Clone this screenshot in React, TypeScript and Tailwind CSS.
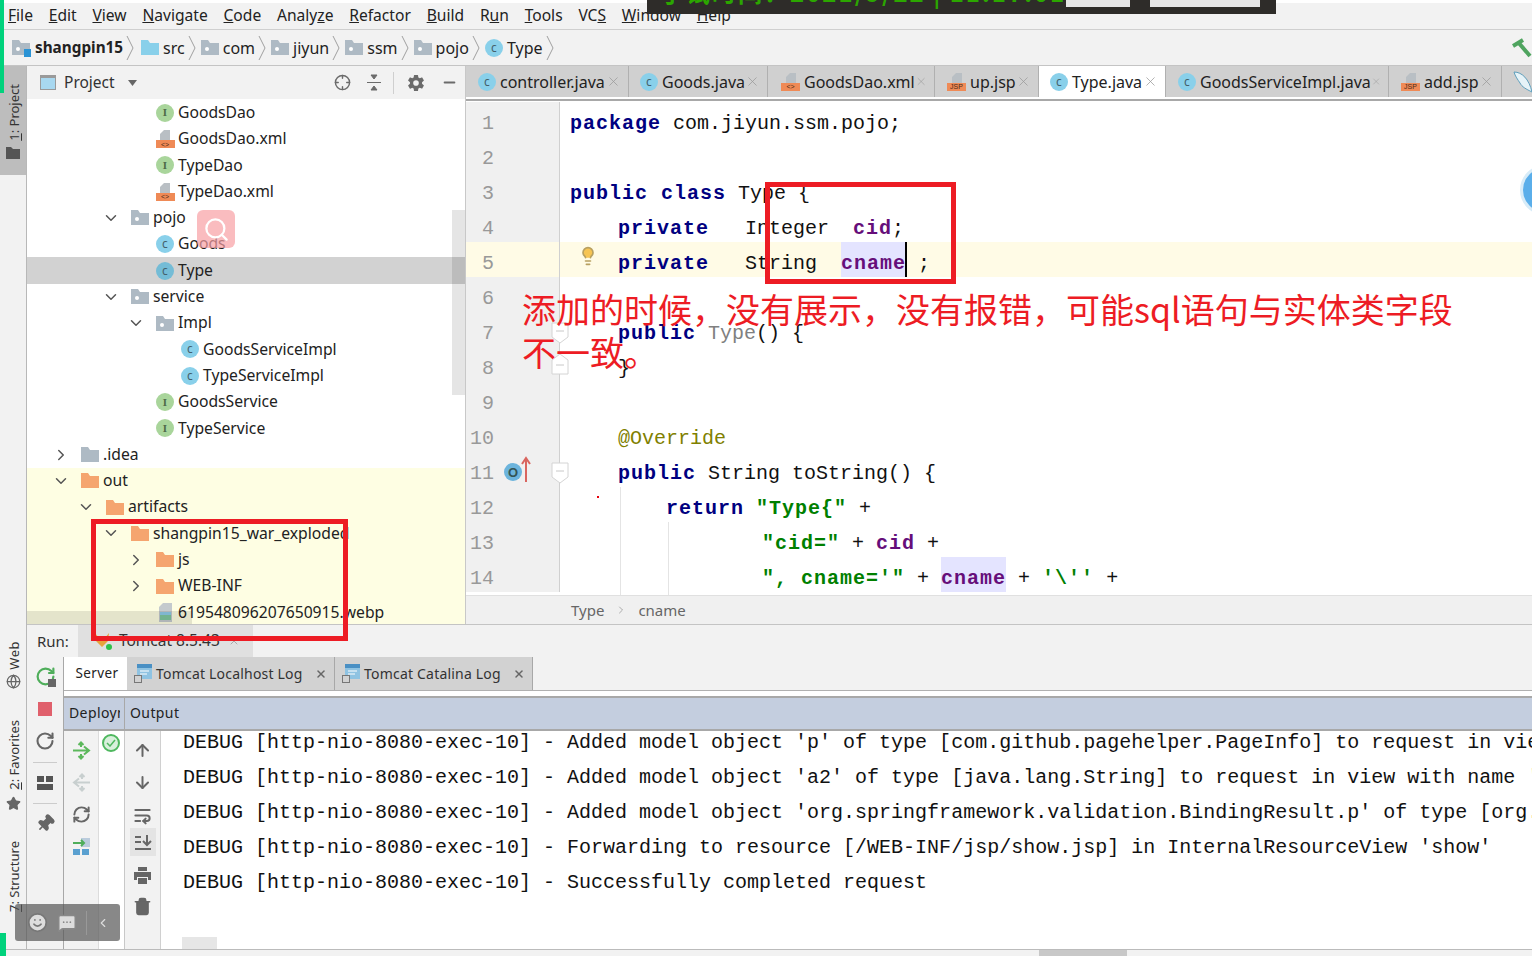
import { ReactNode } from 'react';
import {
  ArrowDown, ArrowUp, ChevronDown, ChevronRight, Crosshair, Globe, Lightbulb, Minus,
  MessageSquareMore, Pin, RefreshCw, RotateCw, Search, Smile, Star, Trash2, WrapText, X,
} from 'lucide-react';
import { IoSettingsSharp } from 'react-icons/io5';

const UI = { fontFamily: '"Noto Sans", sans-serif' };

function ClassIcon({ dark }: { dark?: boolean }) {
  return (
    <span className={`flex w-[18px] h-[18px] shrink-0 items-center justify-center rounded-full text-[12px] leading-none text-[#44606c] ${dark ? 'bg-[#74bcd6]' : 'bg-[#89d0ea]'}`}>
      c
    </span>
  );
}

function InterfaceIcon() {
  return (
    <span className="flex w-[18px] h-[18px] shrink-0 items-center justify-center rounded-full bg-[#a9d59b] text-[11px] font-bold leading-none text-[#4e6b47] font-['Liberation_Serif']">
      I
    </span>
  );
}

function Folder({ color = '#aebac4', dot }: { color?: string; dot?: boolean }) {
  return (
    <svg width="18" height="15" viewBox="0 0 18 15" className="shrink-0">
      <path d="M0 0h7l2 3h9v12H0z" fill={color} />
      {dot && <circle cx="6" cy="9" r="2" fill="#fff" />}
    </svg>
  );
}

function TagFile({ tag }: { tag: string }) {
  return (
    <span className="flex w-[19px] shrink-0 flex-col items-center">
      <svg width="12" height="10" viewBox="0 0 12 10">
        <path d="M5 0h6v10H1V4z" fill="#b9bfc4" />
      </svg>
      <span className="flex h-[8px] w-[19px] items-center justify-center bg-[#ef8a56] text-[7px] leading-none text-[#4a2a18] font-['Liberation_Sans']">
        {tag}
      </span>
    </span>
  );
}

function ImageFile() {
  return (
    <svg width="15" height="19" viewBox="0 0 15 19" className="shrink-0">
      <path d="M5 0h9v19H1V4z" fill="#c4cacd" />
      <rect x="2" y="9" width="11" height="8" fill="#7fc7a0" />
      <rect x="2" y="9" width="11" height="3" fill="#8ecbe8" />
    </svg>
  );
}

function PathSep() {
  return (
    <svg width="8" height="26" viewBox="0 0 8 26" className="ml-[3px] shrink-0">
      <path d="M1 1l6 12-6 12" fill="none" stroke="#a0a0a0" />
    </svg>
  );
}

function DeployArrows({ color, flip }: { color: string; flip?: boolean }) {
  return (
    <svg width="19" height="19" viewBox="0 0 19 19" className={flip ? '-scale-x-100' : ''}>
      <path d="M1 9.5h16M12 5.5l5 4-5 4M9 6V2M6.5 4L9 1.5 11.5 4M9 13v4M6.5 15L9 17.5 11.5 15" fill="none" stroke={color} strokeWidth="2" />
    </svg>
  );
}

type Kind = 'class' | 'iface' | 'xml' | 'pkg' | 'dir' | 'out' | 'img';

const TREE: { d: number; k: Kind; t: string; open?: boolean; shut?: boolean; y?: boolean; sel?: boolean }[] = [
  { d: 3, k: 'iface', t: 'GoodsDao' },
  { d: 3, k: 'xml', t: 'GoodsDao.xml' },
  { d: 3, k: 'iface', t: 'TypeDao' },
  { d: 3, k: 'xml', t: 'TypeDao.xml' },
  { d: 2, k: 'pkg', t: 'pojo', open: true },
  { d: 3, k: 'class', t: 'Goods' },
  { d: 3, k: 'class', t: 'Type', sel: true },
  { d: 2, k: 'pkg', t: 'service', open: true },
  { d: 3, k: 'pkg', t: 'Impl', open: true },
  { d: 4, k: 'class', t: 'GoodsServiceImpl' },
  { d: 4, k: 'class', t: 'TypeServiceImpl' },
  { d: 3, k: 'iface', t: 'GoodsService' },
  { d: 3, k: 'iface', t: 'TypeService' },
  { d: 0, k: 'dir', t: '.idea', shut: true },
  { d: 0, k: 'out', t: 'out', open: true, y: true },
  { d: 1, k: 'out', t: 'artifacts', open: true, y: true },
  { d: 2, k: 'out', t: 'shangpin15_war_exploded', open: true, y: true },
  { d: 3, k: 'out', t: 'js', shut: true, y: true },
  { d: 3, k: 'out', t: 'WEB-INF', shut: true, y: true },
  { d: 3, k: 'img', t: '619548096207650915.webp', y: true },
];

function TreeIcon({ k, sel }: { k: Kind; sel?: boolean }) {
  if (k === 'class') return <ClassIcon dark={sel} />;
  if (k === 'iface') return <InterfaceIcon />;
  if (k === 'xml') return <TagFile tag="<>" />;
  if (k === 'pkg') return <Folder dot />;
  if (k === 'dir') return <Folder />;
  if (k === 'out') return <Folder color="#f5a56f" />;
  return <ImageFile />;
}

const TABS = [
  { t: 'controller.java', w: 'w-[159px] pl-[8px]', i: 'c' },
  { t: 'Goods.java', w: 'w-[139px] pl-[11px]', i: 'c' },
  { t: 'GoodsDao.xml', w: 'w-[167px] pl-[13px]', i: 'x' },
  { t: 'up.jsp', w: 'w-[104px] pl-[12px]', i: 'j' },
  { t: 'Type.java', w: 'w-[127px] pl-[11px]', i: 'c', on: true },
  { t: 'GoodsServiceImpl.java', w: 'w-[223px] pl-[12px]', i: 'c' },
  { t: 'add.jsp', w: 'w-[113px] pl-[12px]', i: 'j' },
];

const CRUMBS: { t: string; n: ReactNode }[] = [
  { t: 'src', n: <Folder color="#89d0ea" /> },
  { t: 'com', n: <Folder dot /> },
  { t: 'jiyun', n: <Folder dot /> },
  { t: 'ssm', n: <Folder dot /> },
  { t: 'pojo', n: <Folder dot /> },
  { t: 'Type', n: <ClassIcon /> },
];

const MENU: [string, string, string][] = [
  ['', 'F', 'ile'], ['', 'E', 'dit'], ['', 'V', 'iew'], ['', 'N', 'avigate'], ['', 'C', 'ode'], ['Analy', 'z', 'e'],
  ['', 'R', 'efactor'], ['', 'B', 'uild'], ['R', 'u', 'n'], ['', 'T', 'ools'], ['VC', 'S', ''], ['', 'W', 'indow'], ['', 'H', 'elp'],
];

const Kw = ({ children }: { children: ReactNode }) => <span className="font-bold tracking-[1px] text-[#000080]">{children}</span>;
const Str = ({ children }: { children: ReactNode }) => <span className="font-bold tracking-[1px] text-[#008000]">{children}</span>;
const Fld = ({ children, mark }: { children: ReactNode; mark?: boolean }) => (
  <span className={`inline-block h-[35px] font-bold tracking-[1px] text-[#660e7a] ${mark ? 'bg-[#e4e4ff]' : ''}`}>{children}</span>
);

const CODE: ReactNode[] = [
  <><Kw>package</Kw> com.jiyun.ssm.pojo;</>,
  <></>,
  <><Kw>public class</Kw> Type {'{'}</>,
  <>{'    '}<Kw>private</Kw>{'   '}Integer{'  '}<Fld>cid</Fld>;</>,
  <>{'    '}<Kw>private</Kw>{'   '}String{'  '}<Fld mark>cname</Fld><span className="inline-block h-[35px] w-[2px] -ml-[1px] -mr-[1px] bg-black align-top" />{' ;'}</>,
  <></>,
  <>{'    '}<Kw>public</Kw> <span className="text-[#808080]">Type</span>() {'{'}</>,
  <>{'    }'}</>,
  <></>,
  <>{'    '}<span className="text-[#808000]">@Override</span></>,
  <>{'    '}<Kw>public</Kw> String toString() {'{'}</>,
  <>{'        '}<Kw>return</Kw> <Str>"Type{'{'}"</Str> +</>,
  <>{'                '}<Str>"cid="</Str> + <Fld>cid</Fld> +</>,
  <>{'                '}<Str>", cname='"</Str> + <Fld mark>cname</Fld> + <Str>'\''</Str> +</>,
];

const LOG = [
  "Added model object 'p' of type [com.github.pagehelper.PageInfo] to request in view with name 'show'",
  "Added model object 'a2' of type [java.lang.String] to request in view with name 'show'",
  "Added model object 'org.springframework.validation.BindingResult.p' of type [org.springframework.validation.BeanPropertyBindingResult]",
  "Forwarding to resource [/WEB-INF/jsp/show.jsp] in InternalResourceView 'show'",
  'Successfully completed request',
];

function FoldMark({ up }: { up?: boolean }) {
  return (
    <svg width="18" height="22" viewBox="0 0 18 22" className={`absolute left-[85px] ${up ? 'top-[6px]' : 'top-[10px]'}`}>
      <path d={up ? 'M1 7l8-6 8 6v14H1z' : 'M1 1h16v14l-8 6-8-6z'} fill="#fff" stroke="#d4d4d4" />
      <path d={up ? 'M5 12h8' : 'M5 9h8'} stroke="#c8c8c8" />
    </svg>
  );
}

function LogTab({ t, w }: { t: string; w: string }) {
  return (
    <div className={`${w} flex h-full items-center border-r border-[#a8a8a8] bg-[#d2d2d2] pl-[7px] text-[14px] tracking-[0.2px] text-[#333]`}>
      <svg width="18" height="19" viewBox="0 0 18 19" className="shrink-0">
        <rect x="3" y="0" width="15" height="15" fill="#8fc3e2" />
        <rect x="3" y="0" width="15" height="4" fill="#4a90c4" />
        <path d="M6 7h9M6 10h7" stroke="#fff" />
        <rect x="0.5" y="11.5" width="7" height="7" fill="#d2d2d2" stroke="#777" />
      </svg>
      <span className="ml-[4px]">{t}</span>
      <X size={12} strokeWidth={3} className="ml-auto mr-[7px] text-[#666]" />
    </div>
  );
}

export default function App() {
  return (
    <div className="relative flex h-[956px] w-[1532px] flex-col overflow-hidden bg-[#f2f2f2] text-[#222]" style={UI}>
      {/* menu */}
      <div className="h-[3px] bg-white" />
      <div className="flex h-[27px] items-center gap-[15.8px] border-b border-[#cfcfcf] pl-[8px] text-[15.6px]">
        {MENU.map(([a, u, b]) => (
          <span key={u + b}>{a}<u>{u}</u>{b}</span>
        ))}
      </div>

      {/* nav path */}
      <div className="flex h-[36px] items-center border-b border-[#c4c4c4] pl-[12px] text-[16px]">
        <span className="relative">
          <Folder dot />
          <span className="absolute bottom-[-2px] right-[-1px] h-[8px] w-[7px] bg-[#2a93d5]" />
        </span>
        <span className="ml-[5px] text-[15.3px] font-bold">shangpin15</span>
        <PathSep />
        <span className="w-[2px]" />
        {CRUMBS.map((c) => (
          <span key={c.t} className="ml-[5px] flex items-center">
            {c.n}
            <span className="ml-[4px]">{c.t}</span>
            <PathSep />
          </span>
        ))}
        <svg width="20" height="20" viewBox="0 0 20 20" className="ml-auto">
          <path d="M1 8L11 2M6 4l12 14" fill="none" stroke="#4fa45f" strokeWidth="4" />
        </svg>
      </div>

      <div className="flex min-h-0 flex-1">
        {/* left tool strip */}
        <div className="flex w-[27px] shrink-0 flex-col border-r border-[#b8b8b8] text-[#333]">
          <div className="flex h-[109px] flex-col items-center justify-center gap-[6px] bg-[#bdbdbd] pt-[2px]">
            <span className="ml-[3px] rotate-180 text-[13px] [writing-mode:vertical-rl]"><u>1</u>: Project</span>
            <svg width="14" height="12" viewBox="0 0 14 12"><path d="M0 0h5l2 2h7v10H0z" fill="#555" /></svg>
          </div>
          <div className="mt-[466px] flex flex-col items-center gap-[4px]">
            <span className="ml-[3px] rotate-180 text-[13px] tracking-[0.5px] [writing-mode:vertical-rl]">Web</span>
            <Globe size={15} className="text-[#666]" />
          </div>
          <div className="mt-[31px] flex flex-col items-center gap-[7px]">
            <span className="ml-[3px] rotate-180 text-[13px] [writing-mode:vertical-rl]"><u>2</u>: Favorites</span>
            <Star size={15} fill="#666" className="text-[#666]" />
          </div>
          <div className="mt-[30px] flex flex-col items-center">
            <span className="ml-[3px] rotate-180 text-[13px] [writing-mode:vertical-rl]"><u>7</u>: Structure</span>
          </div>
        </div>

        <div className="flex min-w-0 flex-1 flex-col">
          <div className="flex h-[559px] shrink-0 border-b border-[#c4c4c4]">
            {/* project */}
            <div className="relative flex w-[439px] shrink-0 flex-col border-r border-[#c8c8c8] bg-white">
              <div className="flex h-[33px] shrink-0 items-center bg-[#f2f2f2] text-[15.5px] text-[#333]">
                <span className="ml-[13px] h-[15px] w-[16px] border border-[#9a9a9a] border-t-[3px] bg-[#a8d8f0]" />
                <span className="ml-[8px]">Project</span>
                <svg width="9" height="6" viewBox="0 0 9 6" className="ml-[13px]"><path d="M0 0h9L4.5 6z" fill="#666" /></svg>
                <Crosshair size={17} className="ml-[197px] text-[#6b6b6b]" />
                <svg width="16" height="17" viewBox="0 0 16 17" className="ml-[15px]">
                  <path d="M1 8.5h14M5 1h6L8 5zM5 16h6l-3-4z" fill="#6b6b6b" stroke="#6b6b6b" />
                </svg>
                <span className="ml-[11px] h-[22px] w-px bg-[#cfcfcf]" />
                <IoSettingsSharp size={18} className="ml-[13px] text-[#6b6b6b]" />
                <Minus size={17} strokeWidth={2.5} className="ml-[16px] text-[#6b6b6b]" />
              </div>
              <div className="relative min-h-0 flex-1 overflow-hidden pt-[0.6px] text-[15.7px]">
                {TREE.map((r) => (
                  <div
                    key={r.t}
                    className={`flex h-[26.3px] items-center whitespace-nowrap ${r.sel ? 'bg-[#d2d2d2]' : r.y ? 'bg-[#fefee3]' : ''}`}
                    style={{ paddingLeft: 25 + r.d * 25 }}
                  >
                    <span className="flex w-[18px] shrink-0 justify-center text-[#555]">
                      {r.open && <ChevronDown size={18} strokeWidth={2} />}
                      {r.shut && <ChevronRight size={18} strokeWidth={2} />}
                    </span>
                    <span className="ml-[11px] flex w-[18px] shrink-0 justify-center"><TreeIcon k={r.k} sel={r.sel} /></span>
                    <span className="ml-[4px]">{r.t}</span>
                  </div>
                ))}
                <div className="absolute right-0 top-[111px] h-[185px] w-[13px] bg-black/10" />
                <div className="absolute bottom-0 left-0 h-[13px] w-[165px] bg-black/10" />
              </div>
              <div className="absolute left-[170px] top-[144px] flex h-[38px] w-[38px] items-center justify-center rounded-[6px] bg-[#f8a0a4]/70">
                <Search size={27} className="text-white" />
              </div>
            </div>

            {/* editor */}
            <div className="flex min-w-0 flex-1 flex-col bg-white">
              <div className="flex h-[31px] shrink-0 overflow-hidden bg-[#d0d0d0] pl-[4px] text-[16px]">
                {TABS.map((t) => (
                  <div key={t.t} className={`${t.w} flex shrink-0 items-center border-r border-[#b0b0b0] ${t.on ? 'bg-white' : ''}`}>
                    {t.i === 'c' ? <ClassIcon /> : t.i === 'x' ? <TagFile tag="<>" /> : <TagFile tag="JSP" />}
                    <span className="ml-[4px] whitespace-nowrap">{t.t}</span>
                    <X size={15} strokeWidth={1.2} className="ml-auto mr-[7px] text-[#999]" />
                  </div>
                ))}
                <svg width="22" height="24" viewBox="0 0 22 24" className="ml-[10px] mt-[4px] shrink-0">
                  <path d="M2 2c8 0 15 7 18 20-6-3-10-5-12-9C6 10 3 6 2 2z" fill="#e6f3f8" stroke="#5f9fbc" />
                </svg>
              </div>
              <div className="h-[4px] shrink-0 border-b-2 border-[#a8a8a8] bg-white" />
              <div className="relative min-h-0 flex-1 overflow-hidden pt-[1px] font-['Liberation_Mono'] text-[20px] leading-[43px]">
                {CODE.map((line, i) => (
                  <div key={i} className={`flex h-[35px] ${i === 4 ? 'bg-[#fffbe6]' : ''}`}>
                    <div className={`relative w-[94px] shrink-0 border-r border-[#d0d0d0] text-[#999] ${i === 4 ? '' : 'bg-[#f0f0f0]'}`}>
                      <span className="block w-[28px] text-right">{i + 1}</span>
                      {i === 4 && <Lightbulb size={20} fill="#f6c453" className="absolute left-[112px] top-[4px] text-[#b8a060]" />}
                      {i === 6 && <FoldMark />}
                      {i === 7 && <FoldMark up />}
                      {i === 10 && <FoldMark />}
                      {i === 10 && (
                        <span className="absolute left-[38px] top-[4px] flex items-start">
                          <span className="mt-[7px] flex h-[18px] w-[18px] items-center justify-center rounded-full bg-[#6cb4dc] font-['Liberation_Sans'] text-[13px] font-bold leading-none text-[#355]">O</span>
                          <svg width="10" height="26" viewBox="0 0 10 26" className="-ml-[1px]">
                            <path d="M5 3v23M1 8l4-6 4 6" fill="none" stroke="#d9655f" strokeWidth="2" />
                          </svg>
                        </span>
                      )}
                    </div>
                    <pre className="pl-[10px] font-['Liberation_Mono'] text-[#111]">{line}</pre>
                  </div>
                ))}
                <div className="absolute left-[154px] top-[386px] h-[108px] w-px bg-[#e4e4e4]" />
                <div className="absolute left-[202px] top-[421px] h-[74px] w-px bg-[#e4e4e4]" />
                <div className="absolute left-[131px] top-[395px] h-[2px] w-[2px] bg-red-600" />
              </div>
              <div className="flex h-[29px] shrink-0 items-center border-t border-[#e0e0e0] bg-[#f0f0f0] pl-[105px] text-[15px] text-[#666]">
                <span>Type</span>
                <ChevronRight size={12} strokeWidth={1} className="mx-[11px]" />
                <span>cname</span>
              </div>
            </div>
          </div>

          {/* run tool window */}
          <div className="flex min-h-0 flex-1 flex-col">
            <div className="flex h-[32px] shrink-0 items-center pl-[10px] text-[15px] text-[#333]">
              <span>Run:</span>
              <div className="ml-[9px] flex h-full w-[175px] items-center bg-[#e0e0e0] pl-[15px] text-[15.5px]">
                <span className="relative mr-[8px] h-[18px] w-[18px]">
                  <svg width="18" height="16" viewBox="0 0 18 16"><path d="M2 1l4 5h6l4-5-1 8-6 6-6-6z" fill="#e8a33d" /></svg>
                  <span className="absolute bottom-0 right-[-1px] h-[6px] w-[6px] rounded-full bg-[#2fc04a]" />
                </span>
                <span>Tomcat 8.5.43</span>
                <X size={12} className="ml-[8px] text-[#aaa]" />
              </div>
            </div>
            <div className="flex min-h-0 flex-1">
              <div className="flex w-[37px] shrink-0 flex-col items-center border-r border-[#a8a8a8] pt-[9px] text-[#666]">
                <span className="relative h-[21px] w-[21px]">
                  <RotateCw size={21} strokeWidth={2.5} className="text-[#4fae5b]" />
                  <span className="absolute bottom-0 right-0 h-[8px] w-[8px] bg-[#666]" />
                </span>
                <span className="mt-[15px] h-[14px] w-[14px] bg-[#e0606c]" />
                <RotateCw size={20} strokeWidth={2.5} className="mt-[15px]" />
                <span className="mt-[11px] h-px w-[24px] bg-[#ccc]" />
                <svg width="16" height="14" viewBox="0 0 16 14" className="mt-[13px]">
                  <path d="M0 0h7v6H0zM9 0h7v6H9zM0 8h16v6H0z" fill="#555" />
                </svg>
                <span className="mt-[13px] h-px w-[24px] bg-[#ccc]" />
                <Pin size={19} fill="#666" className="mt-[10px] rotate-45" />
              </div>
              <div className="flex min-w-0 flex-1 flex-col">
                <div className="flex h-[33px] shrink-0 items-stretch">
                  <div className="flex w-[63px] items-center justify-center bg-white pl-[3px] text-[13.5px] tracking-[0.4px]">Server</div>
                  <LogTab t="Tomcat Localhost Log" w="w-[208px]" />
                  <LogTab t="Tomcat Catalina Log" w="w-[198px]" />
                </div>
                <div className="h-[6px] shrink-0 border-t border-[#b0b0b0] bg-white" />
                <div className="flex h-[35px] shrink-0 items-stretch border-y-[2px] border-y-[#a8a8a8] bg-[#c4cedf] text-[14px] tracking-[0.4px] text-[#222]">
                  <div className="flex w-[61px] items-center border-r border-[#a8a8a8] pb-[2px] pl-[5px]">
                    <span className="w-[51px] overflow-hidden whitespace-nowrap">Deployment</span>
                  </div>
                  <div className="flex items-center pb-[2px] pl-[5px]">Output</div>
                </div>
                <div className="flex min-h-0 flex-1">
                  <div className="flex w-[35px] shrink-0 flex-col items-center gap-[13px] border-r border-[#dcdcdc] pt-[10px]">
                    <DeployArrows color="#5cb85c" />
                    <DeployArrows color="#c8cfcf" flip />
                    <RefreshCw size={19} strokeWidth={2.5} className="text-[#666]" />
                    <svg width="19" height="19" viewBox="0 0 19 19">
                      <rect x="9" y="1" width="9" height="9" fill="#bcd" />
                      <path d="M1 6h11M9 3l3 3-3 3" stroke="#4fae5b" strokeWidth="2" fill="none" />
                      <rect x="1" y="12" width="7" height="6" fill="#5aa0d0" />
                      <rect x="10" y="12" width="7" height="6" fill="#5aa0d0" />
                    </svg>
                  </div>
                  <div className="w-[26px] shrink-0 border-r border-[#c8c8c8] bg-white pl-[3px] pt-[3px]">
                    <span className="flex h-[18px] w-[18px] items-center justify-center rounded-full border-2 border-[#4fb85f] bg-[#d8f0dc]">
                      <svg width="10" height="8" viewBox="0 0 10 8"><path d="M1 4l3 3 5-6" stroke="#4fb85f" strokeWidth="1.5" fill="none" /></svg>
                    </span>
                  </div>
                  <div className="flex w-[36px] shrink-0 flex-col items-center border-r border-[#d0d0d0] pt-[10px] text-[#666]">
                    <ArrowUp size={19} strokeWidth={2.5} />
                    <ArrowDown size={19} strokeWidth={2.5} className="mt-[13px]" />
                    <WrapText size={19} strokeWidth={2.5} className="mt-[14px]" />
                    <span className="mt-[3px] flex h-[28px] w-[26px] items-center justify-center bg-[#e4e4e4]">
                      <svg width="18" height="16" viewBox="0 0 18 16">
                        <path d="M1 15h16M1 8h6M1 3h6M13 1v9M9 7l4 4 4-4" stroke="#666" strokeWidth="2" fill="none" />
                      </svg>
                    </span>
                    <svg width="19" height="19" viewBox="0 0 19 19" className="mt-[10px]">
                      <path d="M5 1h9v4H5zM1 6h17v8h-3v-3H4v3H1zM5 12h9v6H5z" fill="#666" />
                    </svg>
                    <Trash2 size={19} fill="#666" className="mt-[12px]" />
                  </div>
                  <div className="relative min-w-0 flex-1 overflow-hidden whitespace-pre bg-white pl-[22px] font-['Liberation_Mono'] text-[20px] leading-[35px] text-[#111]">
                    <div className="-mt-[6px]">
                      {LOG.map((l) => (
                        <div key={l} className="h-[35px]">DEBUG [http-nio-8080-exec-10] - {l}</div>
                      ))}
                    </div>
                    <div className="absolute bottom-0 left-[21px] h-[12px] w-[35px] bg-[#e6e6e6]" />
                  </div>
                </div>
              </div>
            </div>
          </div>
        </div>
      </div>

      {/* status */}
      <div className="flex h-[7px] shrink-0 border-t border-[#bbb] bg-[#f2f2f2] pl-[1039px]">
        <span className="h-full w-[88px] bg-[#c8c8c8]" />
      </div>

      {/* things lying over the window */}
      <div className="absolute left-0 top-0 h-[93px] w-[4px] bg-[#00d27c]" />
      <div className="absolute bottom-0 left-0 h-[23px] w-[6px] bg-[#00d27c]" />
      <div className="absolute left-[647px] top-0 h-[14px] w-[629px] overflow-hidden bg-[#2e2c29]">
        <span className="absolute left-[13px] top-[-26px] whitespace-nowrap font-['Noto_Sans_CJK_SC'] text-[24px] font-bold tracking-[2px] text-[#2ba600]">{'于试时间\uFF1A2021/9/22 | 11:17:01'}</span>
        <span className="absolute left-[419px] top-0 h-[7px] w-[64px] bg-[#e6e6e6]" />
        <span className="absolute left-[503px] top-0 h-[7px] w-[110px] bg-[#e6e6e6]" />
      </div>
      <div className="absolute left-[91px] top-[519px] h-[122px] w-[257px] border-[5px] border-[#ed1c24]" />
      <div className="absolute left-[765px] top-[182px] h-[102px] w-[191px] border-[5px] border-[#ed1c24]" />
      <div className="absolute left-[522px] top-[287px] w-[945px] font-['Noto_Sans_CJK_SC'] text-[34px] leading-[43px] text-[#ed1c24]">
        {'添加的时候\uFF0C没有展示\uFF0C没有报错\uFF0C可能sql语句与实体类字段不一致\u3002'}
      </div>
      <div className="absolute left-[1520px] top-[165px] h-[50px] w-[50px] rounded-full border-[3px] border-[#d8ecf8] bg-[#5aaeea]" />
      <div className="absolute left-[15px] top-[904px] flex h-[37px] w-[105px] items-center rounded-[3px] bg-[#555]/70 pl-[12px] text-[#ddd]">
        <Smile size={21} fill="#ddd" className="text-[#777]" />
        <MessageSquareMore size={20} fill="#ddd" className="ml-[9px] text-[#888]" />
        <span className="ml-[9px] h-[24px] w-px bg-[#999]" />
        <ChevronRight size={14} className="ml-[9px] rotate-180" />
      </div>
    </div>
  );
}
